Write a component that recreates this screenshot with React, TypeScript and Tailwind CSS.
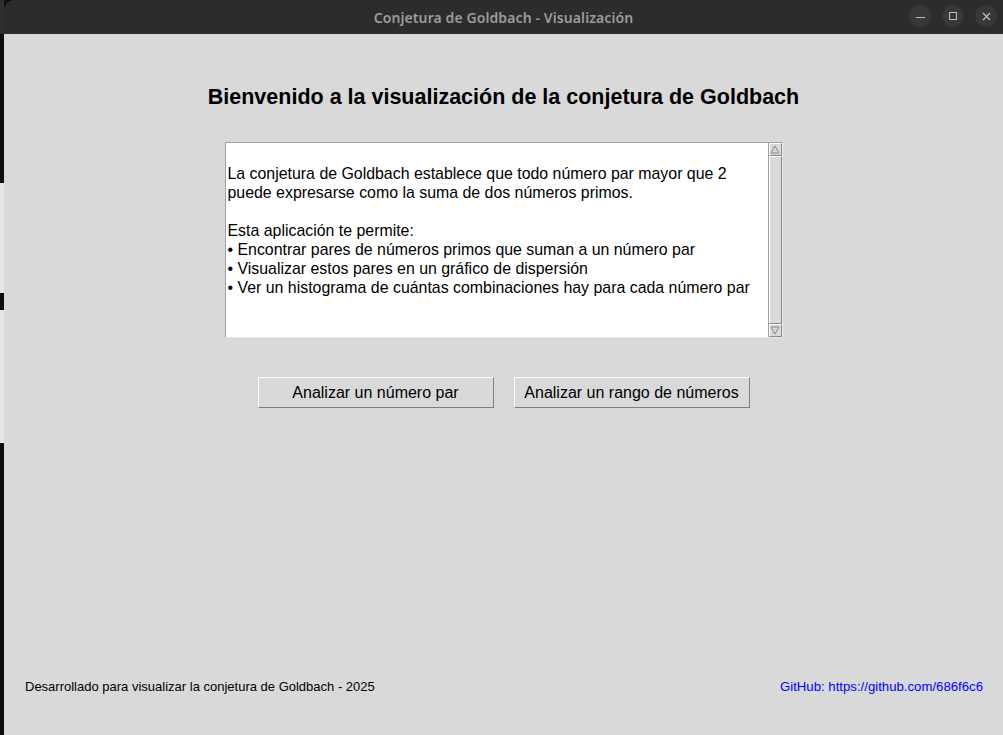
import React from 'react';

const bullets = [
  'Encontrar pares de números primos que suman a un número par',
  'Visualizar estos pares en un gráfico de dispersión',
  'Ver un histograma de cuántas combinaciones hay para cada número par',
];

const ArrowUp = () => (
  <svg width="10" height="9" viewBox="0 0 10 9">
    <path d="M5 1 L9 8 L1 8 Z" fill="none" stroke="#8a8a8a" strokeWidth="1" />
  </svg>
);

const ArrowDown = () => (
  <svg width="10" height="9" viewBox="0 0 10 9">
    <path d="M1 1 L9 1 L5 8 Z" fill="none" stroke="#8a8a8a" strokeWidth="1" />
  </svg>
);

const TkButton: React.FC<{ label: string }> = ({ label }) => (
  <button className="w-[236px] h-[31px] bg-[#d9d9d9] border border-t-white border-l-white border-b-[#808080] border-r-[#808080] text-[16px] text-black leading-none">
    {label}
  </button>
);

export default function App() {
  return (
    <div className="flex w-[1003px] h-[735px] overflow-hidden bg-[#0b0d12] font-['Liberation_Sans',Arial,sans-serif]">
      {/* desktop peeking out on the left */}
      <div className="w-[4px] flex flex-col shrink-0">
        <div className="h-[34px] bg-[#2e2e2e]" />
        <div className="h-[149px] bg-[#0b0d12]" />
        <div className="h-[110px] bg-[#e6e6e6]" />
        <div className="h-[17px] bg-[#0b0d12]" />
        <div className="h-[133px] bg-[#e6e6e6]" />
        <div className="flex-1 bg-[#0b0d12]" />
      </div>

      <div className="flex-1 flex flex-col">
        {/* title bar */}
        <div className="relative h-[34px] bg-[#2c2c2c] rounded-tl-[10px] flex items-center justify-center shrink-0">
          <span className="text-[14px] font-semibold text-[#9b9b9b] font-['Noto_Sans',sans-serif] tracking-[0.1px]">
            Conjetura de Goldbach - Visualización
          </span>
          <div className="absolute right-[6px] top-[5px] flex gap-[11px]">
            <div className="w-[22px] h-[22px] rounded-full bg-[#383838] flex items-center justify-center">
              <div className="w-[9px] h-[1px] bg-[#bdbdbd] mt-[2px]" />
            </div>
            <div className="w-[22px] h-[22px] rounded-full bg-[#383838] flex items-center justify-center">
              <div className="w-[8px] h-[8px] border border-[#bdbdbd]" />
            </div>
            <div className="w-[22px] h-[22px] rounded-full bg-[#383838] flex items-center justify-center">
              <svg width="9" height="9" viewBox="0 0 9 9">
                <path d="M1 1 L8 8 M8 1 L1 8" stroke="#bdbdbd" strokeWidth="1.3" />
              </svg>
            </div>
          </div>
        </div>

        {/* window content */}
        <div className="flex-1 bg-[#d9d9d9] flex flex-col items-center">
          <h1 className="mt-[51px] text-[21.5px] leading-[25px] font-bold text-black">
            Bienvenido a la visualización de la conjetura de Goldbach
          </h1>

          <div className="mt-[32px] flex w-[558px] h-[196px] border border-t-[#a0a0a0] border-l-[#a0a0a0] border-b-[#e8e8e8] border-r-[#e8e8e8]">
            <div className="flex-1 bg-white pl-[2px] pt-[21px] text-[15.9px] leading-[19px] text-black">
              <p>La conjetura de Goldbach establece que todo número par mayor que 2</p>
              <p>puede expresarse como la suma de dos números primos.</p>
              <p className="mt-[19px]">Esta aplicación te permite:</p>
              {bullets.map(b => (
                <p key={b}>• {b}</p>
              ))}
            </div>
            <div className="w-[14px] flex flex-col bg-[#d9d9d9] border-l border-[#a0a0a0]">
              <div className="h-[13px] flex items-center justify-center border border-t-white border-l-white border-b-[#8a8a8a] border-r-[#8a8a8a]">
                <ArrowUp />
              </div>
              <div className="flex-1 border border-t-white border-l-white border-b-[#8a8a8a] border-r-[#8a8a8a]" />
              <div className="h-[13px] flex items-center justify-center border border-t-white border-l-white border-b-[#8a8a8a] border-r-[#8a8a8a]">
                <ArrowDown />
              </div>
            </div>
          </div>

          <div className="mt-[39px] flex gap-[20px]">
            <TkButton label="Analizar un número par" />
            <TkButton label="Analizar un rango de números" />
          </div>

          <div className="mt-auto mb-[40px] w-full flex justify-between items-center pl-[21px] pr-[20px] leading-[16px]">
            <span className="text-black text-[13px]">Desarrollado para visualizar la conjetura de Goldbach - 2025</span>
            <span className="text-[#0000ff] text-[13.2px]">GitHub: https://github.com/686f6c6</span>
          </div>
        </div>
      </div>
    </div>
  );
}
